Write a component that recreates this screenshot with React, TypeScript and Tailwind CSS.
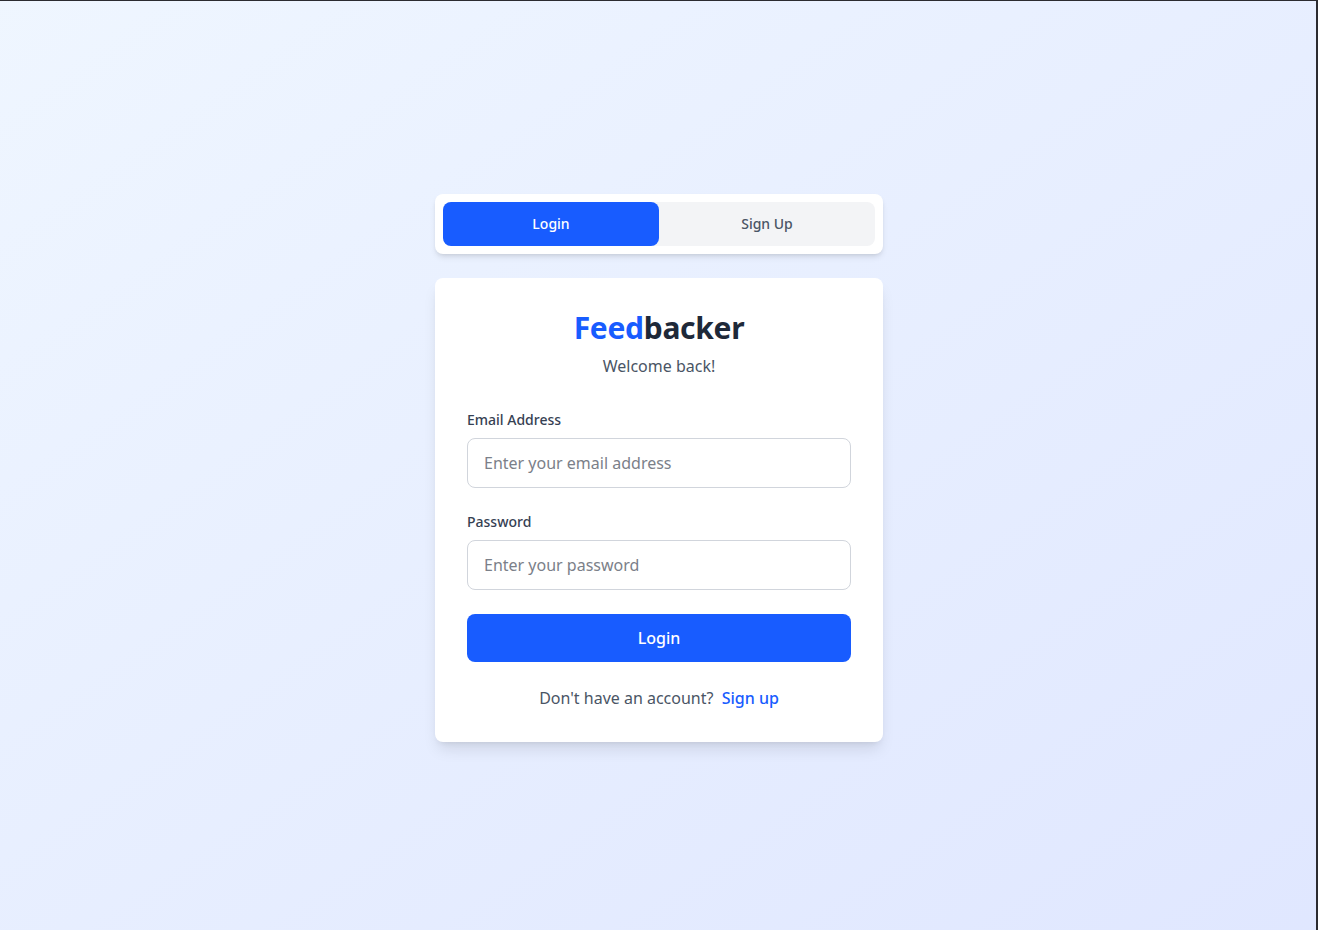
import React, { useState } from "react";

export default function App() {
  const [tab, setTab] = useState<"login" | "signup">("login");
  return (
    <div
      className="min-h-screen w-full bg-gradient-to-br from-blue-50 to-indigo-100 border-t border-r-2 border-[#2b2b30] flex items-center justify-center"
      style={{ fontFamily: '"Noto Sans", "Open Sans", sans-serif' }}
    >
      <div className="w-[448px] ml-[2px] mt-[4px]">
        <div className="bg-white rounded-lg shadow-md p-2 mb-6">
          <div className="flex bg-gray-100 rounded-lg">
            <button
              onClick={() => setTab("login")}
              className={`flex-1 h-11 rounded-lg text-sm font-medium ${
                tab === "login" ? "bg-[#185cff] text-white" : "text-gray-600"
              }`}
            >
              Login
            </button>
            <button
              onClick={() => setTab("signup")}
              className={`flex-1 h-11 rounded-lg text-sm font-medium ${
                tab === "signup" ? "bg-[#185cff] text-white" : "text-gray-600"
              }`}
            >
              Sign Up
            </button>
          </div>
        </div>

        <div className="bg-white rounded-lg shadow-lg p-8">
          <div className="text-center mb-8">
            <h1 className="text-3xl font-bold tracking-[-0.3px]">
              <span className="text-[#185cff]">Feed</span>
              <span className="text-gray-800">backer</span>
            </h1>
            <p className="text-gray-600 mt-2">Welcome back!</p>
          </div>

          <form className="space-y-6" onSubmit={(e) => e.preventDefault()}>
            <div>
              <label className="block text-sm font-medium text-gray-700 mb-2">
                Email Address
              </label>
              <input
                type="email"
                placeholder="Enter your email address"
                className="w-full px-4 py-3 border border-gray-300 rounded-lg text-base placeholder-[#7b8089] outline-none"
              />
            </div>
            <div>
              <label className="block text-sm font-medium text-gray-700 mb-2">
                Password
              </label>
              <input
                type="password"
                placeholder="Enter your password"
                className="w-full px-4 py-3 border border-gray-300 rounded-lg text-base placeholder-[#7b8089] outline-none"
              />
            </div>
            <button
              type="submit"
              className="w-full py-3 bg-[#185cff] text-white rounded-lg font-medium text-base"
            >
              Login
            </button>
          </form>

          <div className="mt-6 text-center text-gray-600">
            Don't have an account?{" "}
            <a href="#" className="ml-1 text-[#185cff] font-medium">
              Sign up
            </a>
          </div>
        </div>
      </div>
    </div>
  );
}
